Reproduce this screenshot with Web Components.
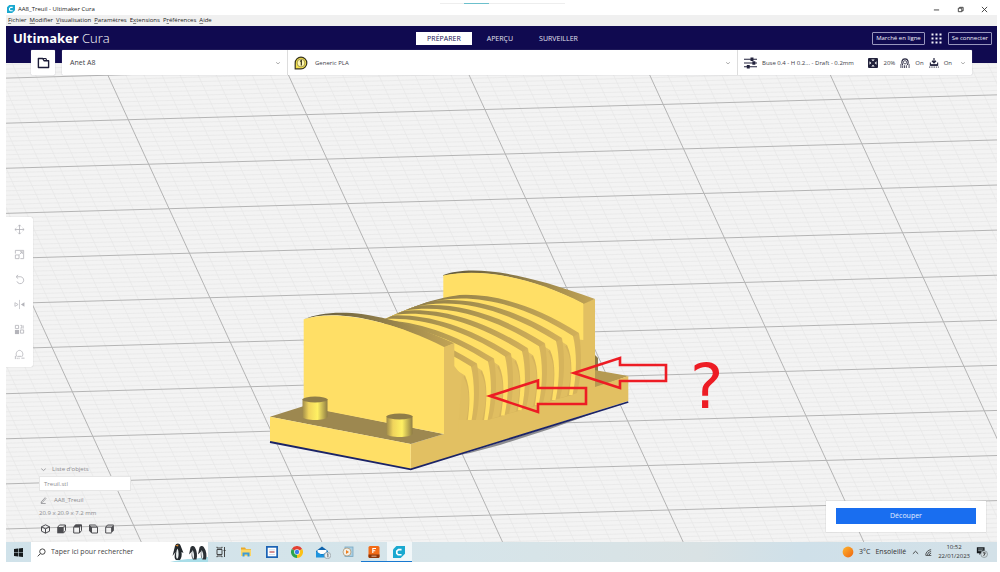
<!DOCTYPE html>
<html lang="fr">
<head>
<meta charset="utf-8">
<title>AA8_Treuil - Ultimaker Cura</title>
<style>
  html, body { height: 100%; margin: 0; }
  body { background: #fff; font: 6px/10px "Open Sans", "Noto Sans", sans-serif; color: #3c3c46; }
</style>
</head>
<body>
<cura-desktop>
  <title-bar slot="title">AA8_Treuil - Ultimaker Cura</title-bar>
  <menu-bar slot="menu"></menu-bar>
  <cura-workspace slot="workspace"></cura-workspace>
  <task-bar slot="taskbar"></task-bar>
</cura-desktop>

<script>
const RESET = `
  :host, *, *::before { box-sizing: border-box; }
  button, input { font: inherit; color: inherit; background: none; border: 0; padding: 0; margin: 0; text-align: left; }
  button { white-space: nowrap; }
  a { color: inherit; text-decoration: none; }
`;

function define(name, css, html, setup) {
  const template = document.createElement('template');
  template.innerHTML = `<style>${RESET}${css}</style>${html}`;
  customElements.define(name, class extends HTMLElement {
    constructor() {
      super();
      this.attachShadow({ mode: 'open' }).append(template.content.cloneNode(true));
    }
    connectedCallback() { if (setup) setup(this, this.shadowRoot); }
  });
}

/* ---------- icons: [viewBox, markup] ---------- */
const line = 'fill="none" stroke="currentColor"';
const ICONS = {
  cura: ['0 0 14 14', `<path d="M4 0H14V9L9 14H0V4Z" fill="#1aa9d0"/><path d="M10 4.2H6.4L4.4 6v2.6l1.6 1.6H10" fill="none" stroke="#fff" stroke-width="1.9"/>`],
  minimize: ['0 0 8 8', `<path d="M1 4.5h6" ${line}/>`],
  restore: ['0 0 8 8', `<path d="M1.5 2.5h4v4h-4zM3 2.5v-1h4v4H5.5" ${line}/>`],
  close: ['0 0 8 8', `<path d="M1 1l6 6M7 1l-6 6" ${line}/>`],
  folder: ['0 0 14 12', `<path d="M1.5 10.8V1.2h4.700l1.6 2.400h4.700v7.200z" ${line} stroke-width="1.5" stroke-linejoin="round"/><path d="M6 1.200h3.500l1 2.200" ${line} stroke-width="1.200"/>`],
  chevron: ['0 0 8 8', `<path d="M1.5 3L4 5.2 6.500 3" ${line} stroke-width=".9"/>`],
  chevronUp: ['0 0 8 8', `<path d="M1 5.500L4 2.600 7 5.500" ${line}/>`],
  apps: ['0 0 11 11', `<path d="M.5.500h2v2h-2zM4.500.500h2v2h-2zM8.500.500h2v2h-2zM.5 4.500h2v2h-2zM4.500 4.500h2v2h-2zM8.500 4.500h2v2h-2zM.5 8.500h2v2h-2zM4.500 8.500h2v2h-2zM8.500 8.500h2v2h-2z" fill="currentColor"/>`],
  spool: ['0 0 14 14', `<path d="M1.200 12.800V7a5.800 5.800 0 1 1 5.800 5.800z" fill="#f6e34c" stroke="#37331c" stroke-width="1.200"/><circle cx="7" cy="7" r="3.900" fill="#fff7b0" stroke="#6b6224" stroke-width=".6"/><path d="M6 5.400l1.300-.8v4.900" fill="none" stroke="#25220f" stroke-width="1.100"/>`],
  sliders: ['0 0 14 12', `<path d="M0 2h14M0 6h14M0 10h14" ${line} stroke-width="1.200"/><path d="M7 .2h3.200v3.600H7zM9 4.200h3.200v3.600H9zM3 8.200h3.200v3.600H3z" fill="currentColor"/>`],
  infill: ['0 0 10 10', `<rect width="10" height="10" rx="1" fill="currentColor"/><path d="M3.300 1.500h3.400L5 3.300zM3.300 8.500h3.400L5 6.700zM1.500 3.300v3.400L3.300 5zM8.500 3.300v3.400L6.700 5z" fill="#fff"/>`],
  support: ['0 0 11 11', `<path d="M3 7.500C1 5 2 1 5.500 1S10 5 8 7.500" ${line} stroke-width="1.200"/><circle cx="5.500" cy="4.700" r="1.800" ${line} stroke-width=".8"/><path d="M1 6.500V11M3 8v3M5 8v3M7 8v3M10 6.500V11" ${line} stroke-width=".9"/>`],
  adhesion: ['0 0 11 11', `<path d="M5.500 0v5M3.300 3l2.200 2.400L7.700 3" ${line} stroke-width="1.300"/><path d="M1.500 5v3h8V5" ${line} stroke-width="1.200"/><path d="M1.500 6.800h8v1.700h-8z" fill="currentColor"/><path d="M0 10h11" ${line} stroke-dasharray="1.500 1"/>`],
  move: ['0 0 12 12', `<path d="M6 1v10M1 6h10M4.500 2.600L6 1l1.500 1.600M4.500 9.400L6 11l1.500-1.600M2.600 4.500L1 6l1.600 1.500M9.400 4.500L11 6 9.400 7.500" ${line} stroke-width=".9"/>`],
  scale: ['0 0 12 12', `<path d="M1.500 5V1.500h9v9H7M1.500 6.500h4v4h-4zM6 6l3-3M6.500 3H9v2.500" ${line} stroke-width=".9"/>`],
  rotate: ['0 0 12 12', `<path d="M3 3h4.500a3.800 3.800 0 1 1-4.300 5M4.500 1L2.200 3l2.300 2" ${line} stroke-width=".9"/>`],
  mirror: ['0 0 12 12', `<path d="M6 1v10" ${line} stroke-width=".7"/><path d="M1 4l3.500 2L1 8z" ${line} stroke-width=".8"/><path d="M11.400 3.500v5L7.500 6z" fill="currentColor"/>`],
  perModel: ['0 0 12 12', `<path d="M1.500 1.500h3.500v3.500H1.500zM7 6.500h3.500V10H7zM7 1.500h1.500v3H7M10 1.500v3.500" ${line} stroke-width=".9"/><path d="M1 6.500h4.500V11H1z" fill="currentColor"/>`],
  blocker: ['0 0 12 12', `<path d="M3.500 8.500C1 6 3 1.500 6 1.500S11 6 8.500 8.500M4 8h4M1.500 7.500V11M3.500 9.500V11M5.500 9.500V11M8 10h3.500" ${line} stroke-width=".9"/>`],
  pencil: ['0 0 8 8', `<path d="M1.500 5.500L5.800.8l1 1-4.300 4.600-1.300.2zM1 7.400h5.500" ${line} stroke-width=".9"/>`],
  view3d: ['0 0 10 10', `<path d="M5 .8l4 2v4.400l-4 2-4-2V2.800zM1 2.800l4 2 4-2M5 4.800v4.400" ${line}/>`],
  viewFront: ['0 0 10 10', `<path d="M1.200 3.200L3 1h6v5.600L7 9M7 3.200L9 1" ${line}/><path d="M.7 3h6.500v6.300H.7z" fill="currentColor"/>`],
  viewTop: ['0 0 10 10', `<path d="M1.200 3.200L3 1h6v5.600L7 9H1.200zM7 3.200V9" ${line}/><path d="M.8 3.600L3 .6h6.400L7.200 3.600z" fill="currentColor"/>`],
  viewLeft: ['0 0 10 10', `<path d="M1 1h5.800L9 3.200V9H3.200L1 6.600zM3.200 3.200H9" ${line}/><path d="M.6.600L3.500 3.200v6L.6 6.800z" fill="currentColor"/>`],
  viewRight: ['0 0 10 10', `<path d="M1.200 3.200L3 1h6M7 9H1.200V3.200H7" ${line}/><path d="M6.600 3.200L9.400.8v5.800L6.600 9.300z" fill="currentColor"/>`],
  windows: ['0 0 9 9', `<path d="M0 1l4-.5v3.700H0zM4.600.4L9 0v4.200H4.600zM0 4.800h4v3.700L0 8zM4.600 4.800H9V9l-4.400-.4z" fill="#14191c"/>`],
  search: ['0 0 10 10', `<circle cx="6" cy="4" r="3" ${line}/><path d="M3.800 6.200L.8 9.300" ${line}/>`],
  taskview: ['0 0 12 12', `<path d="M2 3.500h5v5H2zM2 .8v1.200h5V.8M2 11.200V10h5v1.200M9.500 1v10M8.600 4.500h2" ${line} stroke-width=".9"/>`],
  explorer: ['0 0 12 12', `<path d="M1 1.500h4l1 1.500h5v3H1z" fill="#e9a92d"/><path d="M1 3.500h10V10H1z" fill="#fbd667"/><path d="M2.500 6.500h7v4h-2V8.500h-3v2h-2z" fill="#3d9bd8"/>`],
  ruler: ['0 0 14 14', `<rect x="1" y="1" width="12" height="12" fill="#fff" stroke="#1b63b5" stroke-width="2"/><path d="M4 7h6" stroke="#b7474a" stroke-width="1.400"/><path d="M3.500 4.500h7M3.500 10h7" stroke="#c7d6e8"/>`],
  chrome: ['0 0 12 12', `<path d="M6 6L.8 3A6 6 0 0 1 11.200 3z" fill="#e34133"/><path d="M6 6l5.200-3A6 6 0 0 1 6 12z" fill="#fbc116"/><path d="M6 6v6A6 6 0 0 1 .8 3z" fill="#2da44e"/><circle cx="6" cy="6" r="2.800" fill="#fff"/><circle cx="6" cy="6" r="2.200" fill="#3b7ded"/>`],
  mail: ['0 0 16 13', `<path d="M1 5l6-4.500L13 5v6H1z" fill="#0f64ad"/><path d="M2.500 4h9v4h-9z" fill="#fff"/><path d="M1 5.200l6 3.600 6-3.600V11.500H1z" fill="#1f94dd"/><circle cx="12.500" cy="9.500" r="3.200" fill="#e8eef1" stroke="#8b979d" stroke-width=".7"/><path d="M12.200 8l.7-.3v3.600" fill="none" stroke="#444" stroke-width=".8"/>`],
  media: ['0 0 12 12', `<rect x="3" y="1" width="8" height="9.500" fill="#a9cfe3" stroke="#78a6c0" stroke-width=".8"/><circle cx="5" cy="6" r="4" fill="#f3f0e8" stroke="#b09a7a" stroke-width=".8"/><path d="M4 4l3 2-3 2z" fill="#ef7f1d"/>`],
  fusion: ['0 0 12 12', `<rect x=".5" y="0" width="11" height="12" rx="1.500" fill="#f26b16"/><path d="M.5 8.500h11v2a1.500 1.500 0 0 1-1.500 1.500H2a1.500 1.500 0 0 1-1.500-1.500z" fill="#8d3608"/><path d="M4.800 7V2.500h3.200M4.800 4.700h2.500" fill="none" stroke="#fff" stroke-width="1.100"/><path d="M3.500 10.200h5" stroke="#e9b08c"/>`],
  sun: ['0 0 12 12', `<defs><linearGradient id="s" x1="0" y1="0" x2="1" y2="1"><stop offset="0" stop-color="#ffb52e"/><stop offset="1" stop-color="#ee6510"/></linearGradient></defs><circle cx="6" cy="6" r="5.400" fill="url(#s)"/>`],
  wifi: ['0 0 8 8', `<path d="M.8 7A6.500 6.500 0 0 1 7 .8M2.800 7A4.500 4.500 0 0 1 7 2.800M4.800 7A2.500 2.500 0 0 1 7 4.800M.8 7.500h6.400" ${line} stroke-width=".9"/>`],
  note: ['0 0 14 14', `<path d="M1 1.500h9v7H6L4 10.500v-2H1z" fill="#15191c"/><path d="M2.500 3.500h6M2.500 5.500h5" stroke="#cfdde3" stroke-width=".8"/><circle cx="9.500" cy="9.500" r="3.900" fill="#d3dde1" stroke="#7b858a" stroke-width=".8"/><path d="M8 8h2.800L9 11.500" fill="none" stroke="#222" stroke-width="1"/>`],
  penguins: ['0 0 38 20', `
    <path d="M0 20C10 18 14 17 20 17S33 15 38 15v5z" fill="#a9dde8"/>
    <path d="M5 4C6 .800 9.500.800 10.500 3.500L13.500 11l-2-1c.5 3 0 6-1.500 8H6c-2-1.500-1.500-5-.5-8l-3 4z" fill="#23282d"/><path d="M7.500 6.500c1.200 2 1.500 7 .3 10H6.600C5.600 14 6 9 7.500 6.500z" fill="#edf1f2"/><path d="M8.500 2.500L5 3.500 8 4.500z" fill="#e08a2c"/>
    <path d="M20.500 5.500c.8-2 3.500-2 4.500 0 2 3.500 2.500 8 1.500 12h-3.500c-1.800-2-1.500-5-1-8L19 12.500z" fill="#2b3035"/><path d="M22.500 8c1.400 2 1.900 5 1.300 8.500h-1C22 13 21.800 10 22.500 8z" fill="#e8edef"/>
    <path d="M29.500 5.500c.8-2 3.500-2 4.500 0 2.500 3.500 3 8 2 12h-3.500c-1.800-2-2-5-1.500-8L28 12.500z" fill="#2b3035"/><path d="M31.500 8c1.600 2 2.200 5 1.500 8.500h-1C31.200 13 31 10 31.500 8z" fill="#e8edef"/>`]
};
define('ui-icon', `
  :host { display: inline-flex; flex: none; width: 12px; height: 12px; }
  svg { width: 100%; height: 100%; display: block; }
`, '', (host, root) => {
  const [box, body] = ICONS[host.getAttribute('name')];
  if (!root.querySelector('svg'))
    root.append(document.createRange().createContextualFragment(`<svg viewBox="${box}" aria-hidden="true">${body}</svg>`));
});

/* ---------- desktop frame ---------- */
define('cura-desktop', `
  :host { display: flex; flex-direction: column; min-height: 100%; padding: 0 3px 10px 6px; }
  ::slotted(cura-workspace) { flex: 1; }
`, `<slot name="title"></slot><slot name="menu"></slot><slot name="workspace"></slot><slot name="taskbar"></slot>`);

define('title-bar', `
  :host { display: grid; grid-template-columns: 1fr auto 1fr; height: 15px; padding: 3px 0 0 1px; }
  .name { display: flex; align-items: center; gap: 3px; color: #222; }
  .name ui-icon { width: 8px; height: 8px; }
  .notch { width: 125px; height: 1px; background: linear-gradient(90deg, #eee 24px, #6cc0cc 24px 49px, #eee 49px); }
  .controls { display: flex; justify-content: flex-end; align-items: center; gap: 17px; padding-right: 9px; color: #333; }
  .controls ui-icon { width: 7px; height: 7px; }
  button { display: flex; }
`, `
  <div class="name"><ui-icon name="cura"></ui-icon><slot></slot></div>
  <div class="notch"></div>
  <div class="controls">
    <button aria-label="Réduire"><ui-icon name="minimize"></ui-icon></button>
    <button aria-label="Restaurer"><ui-icon name="restore"></ui-icon></button>
    <button aria-label="Fermer"><ui-icon name="close"></ui-icon></button>
  </div>`);

define('menu-bar', `
  :host { display: block; height: 11px; background: #f0f0f0; }
  nav { display: flex; gap: 3px; padding-left: 2px; color: #222; }
  u { text-underline-offset: 1px; text-decoration-thickness: 1px; text-decoration-color: #888; }
`, `<nav>
  <button><u>F</u>ichier</button><button><u>M</u>odifier</button><button><u>V</u>isualisation</button>
  <button><u>P</u>aramètres</button><button>E<u>x</u>tensions</button><button>P<u>r</u>éférences</button><button><u>A</u>ide</button>
</nav>`);

/* ---------- Cura window ---------- */
define('cura-workspace', `
  :host { display: flex; flex-direction: column; position: relative; background: #f2f2f2; overflow: hidden; }
  build-scene { position: absolute; inset: 0; }
  cura-header, config-bar, main { position: relative; }
  main { flex: 1; display: flex; flex-direction: column; justify-content: space-between; align-items: flex-start; padding-top: 142px; }
  .bottom { align-self: stretch; display: flex; justify-content: space-between; align-items: flex-end; padding: 0 11px 8px 33px; }
  slice-panel { margin-bottom: 2px; }
`, `
  <build-scene></build-scene>
  <cura-header></cura-header>
  <config-bar></config-bar>
  <main>
    <tool-column></tool-column>
    <div class="bottom"><object-list></object-list><slice-panel></slice-panel></div>
  </main>`);

define('cura-header', `
  :host { display: grid; grid-template-columns: 1fr auto 1fr; align-items: center; height: 24px; padding: 0 5px 0 7px; background: #100a50; color: #fff; }
  h1 { margin: 0; font-size: 13px; line-height: 20px; font-weight: 300; }
  h1 b { font-weight: 700; }
  nav { display: flex; gap: 4px; font-size: 7px; }
  nav a { padding: 1px 11px; line-height: 11px; color: #e3e3f0; }
  nav a[aria-current] { background: #fff; color: #100a50; }
  .account { display: flex; justify-content: flex-end; align-items: center; gap: 6px; }
  .account button { height: 13px; padding: 0 3px; border: 1px solid #9896bd; border-radius: 1px; color: #f2f2fa; }
  .account .apps { border: 0; padding: 0; height: 11px; }
  .apps ui-icon { width: 11px; height: 11px; }
`, `
  <h1><b>Ultimaker</b> Cura</h1>
  <nav><a href="#prepare" aria-current="page">PRÉPARER</a><a href="#preview">APERÇU</a><a href="#monitor">SURVEILLER</a></nav>
  <div class="account"><button>Marché en ligne</button><button class="apps" aria-label="Applications"><ui-icon name="apps"></ui-icon></button><button>Se connecter</button></div>`);

define('config-bar', `
  :host { display: flex; gap: 7px; height: 25px; padding: 0 25px 0 25px; background: linear-gradient(#100a50 13px, transparent 13px); }
  .open, .panel { background: #fff; border-radius: 1px; box-shadow: 0 0 1px #9a9aa6; }
  .open { width: 24px; display: flex; align-items: center; justify-content: center; color: #1c1c38; }
  .open ui-icon { width: 13px; height: 12px; }
  .panel { flex: 1; display: grid; grid-template-columns: 1fr 2fr 235px; }
  .panel button { display: flex; align-items: center; padding: 0 6px 0 8px; }
  .printer { font-size: 7px; }
  .panel .material { gap: 7px; padding-left: 6px; border-left: 1px solid #ddd; }
  .panel .settings { gap: 5px; padding-left: 6px; border-left: 1px solid #ddd; }
  .end { margin-left: auto; width: 6px; height: 6px; color: #888; }
  .settings .end { margin-left: 3px; }
  .spool { width: 14px; height: 14px; }
  .sliders { width: 13px; height: 12px; }
  .i { width: 10px; height: 10px; color: #22223c; }
  .sliders { color: #22223c; }
  .profile { flex: 1; }
`, `
  <button class="open" aria-label="Ouvrir un fichier"><ui-icon name="folder"></ui-icon></button>
  <div class="panel">
    <button class="printer">Anet A8<ui-icon class="end" name="chevron"></ui-icon></button>
    <button class="material"><ui-icon class="spool" name="spool"></ui-icon>Generic PLA<ui-icon class="end" name="chevron"></ui-icon></button>
    <button class="settings"><ui-icon class="sliders" name="sliders"></ui-icon><span class="profile">Buse 0.4 - H 0.2... - Draft - 0.2mm</span>
      <ui-icon class="i" name="infill"></ui-icon><span>20%</span>
      <ui-icon class="i" name="support"></ui-icon><span>On</span>
      <ui-icon class="i" name="adhesion"></ui-icon><span>On</span>
      <ui-icon class="end" name="chevron"></ui-icon></button>
  </div>`);

define('tool-column', `
  :host { display: grid; width: 27px; background: #fff; border-radius: 0 2px 2px 0; box-shadow: 0 0 1px #aaa; color: #b4b4ba; }
  button { height: 25px; display: flex; align-items: center; justify-content: center; }
  ui-icon { width: 11px; height: 11px; }
`, `
  <button aria-label="Déplacer"><ui-icon name="move"></ui-icon></button>
  <button aria-label="Mettre à l'échelle"><ui-icon name="scale"></ui-icon></button>
  <button aria-label="Pivoter"><ui-icon name="rotate"></ui-icon></button>
  <button aria-label="Miroir"><ui-icon name="mirror"></ui-icon></button>
  <button aria-label="Paramètres par modèle"><ui-icon name="perModel"></ui-icon></button>
  <button aria-label="Blocage des supports"><ui-icon name="blocker"></ui-icon></button>`);

define('object-list', `
  :host { display: grid; justify-items: start; color: #8c8c90; }
  button { display: flex; align-items: center; }
  .toggle { gap: 5px; height: 14px; padding-left: 1px; }
  .file { width: 92px; height: 15px; padding-left: 4px; background: #fff; border: 1px solid #e6e6e6; }
  .job { gap: 7px; height: 18px; padding-left: 1px; }
  ui-icon { width: 7px; height: 7px; }
  p { margin: 0; line-height: 9px; }
  .views { display: flex; gap: 5px; padding: 6px 0 0 1px; color: #4c4c50; }
  .views ui-icon { width: 11px; height: 10px; }
`, `
  <button class="toggle" aria-expanded="true"><ui-icon name="chevron"></ui-icon>Liste d'objets</button>
  <button class="file">Treuil.stl</button>
  <button class="job"><ui-icon name="pencil"></ui-icon>AA8_Treuil</button>
  <p>20.9 x 20.9 x 7.2 mm</p>
  <div class="views">
    <button aria-label="Vue 3D"><ui-icon name="view3d"></ui-icon></button><button aria-label="Vue de face"><ui-icon name="viewFront"></ui-icon></button>
    <button aria-label="Vue du dessus"><ui-icon name="viewTop"></ui-icon></button><button aria-label="Vue gauche"><ui-icon name="viewLeft"></ui-icon></button>
    <button aria-label="Vue droite"><ui-icon name="viewRight"></ui-icon></button>
  </div>`);

define('slice-panel', `
  :host { display: block; width: 160px; padding: 7px 10px 8px; background: #fff; box-shadow: 0 0 1px #aaa; }
  button { display: block; width: 100%; height: 16px; background: #196ef0; color: #e4eefe; text-align: center; font-size: 7px; }
`, `<button>Découper</button>`);

/* ---------- build plate and model ---------- */
define('build-scene', `
  :host { display: block; }
  svg { width: 100%; height: 100%; display: block; }
`, `<svg viewBox="6 26 991 516" preserveAspectRatio="xMidYMid slice" role="img" aria-label="Modèle AA8_Treuil sur le plateau">
  <defs>
    <linearGradient id="rim" gradientUnits="userSpaceOnUse" x1="400" y1="0" x2="580" y2="0"><stop offset="0" stop-color="#857446"/><stop offset=".55" stop-color="#a8924f"/><stop offset="1" stop-color="#d2b05a"/></linearGradient>
    <linearGradient id="top" gradientUnits="userSpaceOnUse" x1="304" y1="0" x2="454" y2="0"><stop offset="0" stop-color="#5e573c"/><stop offset=".5" stop-color="#8d7b48"/><stop offset="1" stop-color="#c3a556"/></linearGradient>
    <linearGradient id="top2" gradientUnits="userSpaceOnUse" x1="443" y1="0" x2="595" y2="0"><stop offset="0" stop-color="#5e573c"/><stop offset=".5" stop-color="#8d7b48"/><stop offset="1" stop-color="#c3a556"/></linearGradient>
    <linearGradient id="peg"><stop offset="0" stop-color="#a08b4a"/><stop offset=".25" stop-color="#f0d45c"/><stop offset=".6" stop-color="#fff063"/><stop offset="1" stop-color="#8f7d45"/></linearGradient>
    <clipPath id="drum"><path d="M384 319.500C410 308 440 294.500 476 293.800 505 294 535 305 583 332V420H384z"/></clipPath>
  </defs>
  <rect x="-994" y="-474" width="2991" height="1516" fill="#f3f3f3"/>
  <path id="minor" fill="none" stroke="#e7e7e7" stroke-width=".7"/>
  <path id="major" fill="none" stroke="#b4b4b4" stroke-width="1"/>
  <path d="M460 455L600 411l-50 18-50 16-30 8z" fill="#8d8d90"/>
  <path d="M595 355l3 3v14h-3z" fill="#8b7a47"/>
  <path d="M583 368L628.300 376 595 388z" fill="#b59a52"/>
  <path d="M444 347L454 343 480 325 583 303 595 299V387L628.300 376V401L410.700 469.300V444L444 434z" fill="#e2c062"/>
  <path d="M443.300 275C470 265 520 271 595 299L583.300 304C530 276 480 268 443.300 276z" fill="url(#top2)"/>
  <path d="M443.300 275.500C480 268 530 276 583.300 303.500V340L500 330 443.300 312z" fill="#ffdf66"/>
  <g id="fins" clip-path="url(#drum)"></g>
  <path d="M303.700 319.300C330 309 375 307 454.300 343.300L444 347.500C380 315 330 310 303.700 319.300z" fill="url(#top)"/>
  <path d="M444 347L454.300 343.300V366L462 376 458 432 444 434z" fill="#e2c062"/>
  <path d="M270 416.700L304 406 444 434 410.700 444z" fill="#9d8850"/>
  <path d="M303.700 319.300C330 311 380 315 444 347V434L303.700 406.500z" fill="#ffdf66"/>
  <path d="M270 416.700L410.700 444V469.300L270 441.700z" fill="#ffdf66"/>
  <path d="M270 442L410.700 469.300 628.300 402" fill="none" stroke="#1b2366" stroke-width="1.800"/>
  <path d="M302.500 399V417C304 421 326 421 327.500 417V399z" fill="url(#peg)"/><ellipse cx="315" cy="399.500" rx="12.500" ry="3" fill="#8f7d48"/>
  <path d="M386.500 416V434C388 438 411 438 412.500 434V416z" fill="url(#peg)"/><ellipse cx="399.500" cy="416.500" rx="13" ry="3" fill="#8f7d48"/>
  <g fill="none" stroke="#ed1c24" stroke-width="2.600">
    <path d="M490 396L538 380.500V388H586V404H538V412z"/>
    <path d="M574 373L620 358V365H666V381H620V388z"/>
  </g>
  <text x="690" y="408" font-family="DejaVu Sans, sans-serif" font-size="63" fill="#ed1c24">?</text>
</svg>`, (host, root) => {
  /* the plate grid is an affine lattice: u along a row, v down a column */
  const o = [128.3, 119.7], u = [178.3, -5.1], v = [20.4, 44.5];
  const at = (a, b) => `${(o[0] + a * u[0] + b * v[0]).toFixed(1)} ${(o[1] + a * u[1] + b * v[1]).toFixed(1)}`;
  let minor = '', major = '';
  for (let k = -100; k <= 160; k++) {
    const t = k / 10, d = `M${at(t, -12)}L${at(t, 22)}M${at(-10, t)}L${at(12, t)}`;
    if (k % 10) minor += d; else major += d;
  }
  root.getElementById('minor').setAttribute('d', minor);
  root.getElementById('major').setAttribute('d', major);

  /* rear fin first; each nearer one is the same shape, one step to the front */
  let fins = '';
  for (let i = 0; i < 7; i++) {
    fins += `<g transform="translate(${-17 * i} ${5.1 * i})">
      <path d="M567 345L573 335 579 333C582 352 582 375 577 393L569 396 557 399 558 352z" fill="#d6b45c"/>
      <path d="M564 344C573 358 572 375 567 396L557 399C561 380 561 362 556 350z" fill="#e0be61"/>
      <path d="M385 322C430 288 495 280 579 333L573 337C495 289 430 291 385 324z" fill="url(#rim)"/>
      <path d="M385 323C430 290 495 286.500 573 336C577 352 577 375 572.500 395H569C572 375 573 358 567 345C525 316 470 302 385 346z" fill="#ffdf66"/>
    </g>`;
  }
  root.getElementById('fins').innerHTML = fins;
});

/* ---------- Windows task bar ---------- */
define('task-bar', `
  :host { display: flex; height: 20px; background: linear-gradient(90deg, #d0e2ea, #d6e5ea 45%, #d9e2e4 70%, #cfe0e9 80%, #d3e1e8); font-size: 7px; }
  button { display: flex; align-items: center; justify-content: center; }
  .start { width: 25px; }
  .start ui-icon { width: 9px; height: 9px; }
  .search { width: 177px; display: flex; align-items: center; gap: 5px; padding-left: 6px; background: #fff; color: #333; }
  .search ui-icon { width: 9px; height: 9px; }
  .search input { flex: 1; min-width: 0; outline: 0; }
  .search input::placeholder { color: #444; opacity: 1; }
  .search .art { width: 38px; height: 20px; }
  .apps { width: 204px; display: grid; grid-template-columns: repeat(8, 1fr); color: #333; }
  .apps .open { border-bottom: 1px solid #1878d0; }
  .apps .active { background: #f1f7f9; }
  .wide { width: 16px; height: 13px; }
  .tray { margin-left: auto; display: flex; align-items: center; color: #333; padding-right: 9px; gap: 6px; }
  .weather { gap: 5px; }
  .tray .s { width: 7px; height: 7px; }
  .clock { font-size: 6px; line-height: 9px; text-align: center; }
  .clock time { display: block; }
`, `
  <button class="start" aria-label="Démarrer"><ui-icon name="windows"></ui-icon></button>
  <label class="search"><ui-icon name="search"></ui-icon><input type="search" aria-label="Rechercher" placeholder="Taper ici pour rechercher"><ui-icon class="art" name="penguins"></ui-icon></label>
  <div class="apps">
    <button aria-label="Vue des tâches"><ui-icon name="taskview"></ui-icon></button>
    <button aria-label="Explorateur"><ui-icon name="explorer"></ui-icon></button>
    <button aria-label="Mesures"><ui-icon name="ruler"></ui-icon></button>
    <button aria-label="Chrome"><ui-icon name="chrome"></ui-icon></button>
    <button aria-label="Courrier"><ui-icon class="wide" name="mail"></ui-icon></button>
    <button aria-label="Lecteur"><ui-icon name="media"></ui-icon></button>
    <button class="open" aria-label="Fusion"><ui-icon name="fusion"></ui-icon></button>
    <button class="open active" aria-label="Cura"><ui-icon name="cura"></ui-icon></button>
  </div>
  <div class="tray">
    <button class="weather"><ui-icon name="sun"></ui-icon><span>3°C</span><span>Ensoleillé</span></button>
    <button aria-label="Icônes cachées"><ui-icon class="s" name="chevronUp"></ui-icon></button>
    <button aria-label="Réseau"><ui-icon class="s" name="wifi"></ui-icon></button>
    <div class="clock"><time>10:52</time><time>22/01/2023</time></div>
    <button aria-label="Notifications"><ui-icon name="note"></ui-icon></button>
  </div>`);
</script>
</body>
</html>
